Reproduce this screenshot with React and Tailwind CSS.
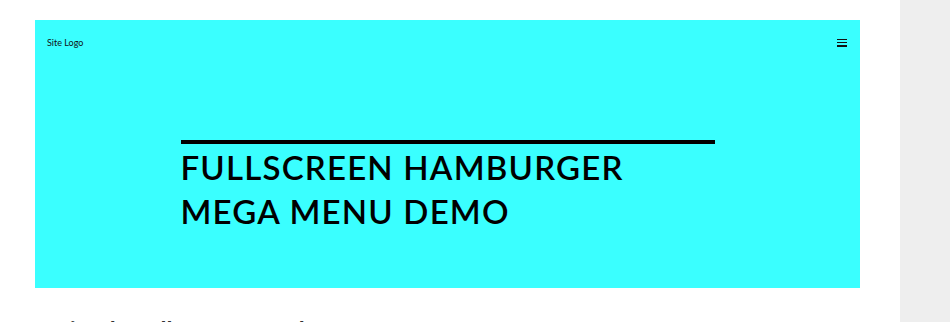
import React from "react";

const Hamburger = () => (
  <button className="flex h-[8px] w-[10px] flex-col justify-between" aria-label="Menu">
    <span className="block h-[1.5px] w-full bg-[#111]" />
    <span className="block h-[1.5px] w-full bg-[#111]" />
    <span className="block h-[1.5px] w-full bg-[#111]" />
  </button>
);

const App = () => {
  return (
    <div
      className="flex h-[322px] w-full overflow-hidden bg-white"
      style={{ fontFamily: "Lato, 'Noto Sans', sans-serif" }}
    >
      <main className="flex-1 pl-[35px] pr-[40px] pt-[20px]">
        <section className="h-[268px] bg-[#3affff]">
          <header className="flex h-[44px] items-center justify-between pl-[12px] pr-[13px] pt-[1px]">
            <a href="#" className="text-[9px] leading-none text-[#111]">
              Site Logo
            </a>
            <Hamburger />
          </header>

          <div className="mx-auto mt-[76px] w-[534px]">
            <div className="h-[4px] w-full bg-black" />
            <h1 className="mt-[1px] text-[33px] font-semibold uppercase leading-[44px] tracking-[1.2px] text-black">
              Fullscreen Hamburger
              <br />
              Mega Menu Demo
            </h1>
          </div>
        </section>

        <h2 className="mt-[28px] text-[24px] font-bold leading-tight text-[#333]">
          A Simple Fullscreen Hamburger Mega Menu
        </h2>
      </main>

      <aside className="w-[50px] shrink-0 bg-[#eeeeee]" />
    </div>
  );
};

export default App;
